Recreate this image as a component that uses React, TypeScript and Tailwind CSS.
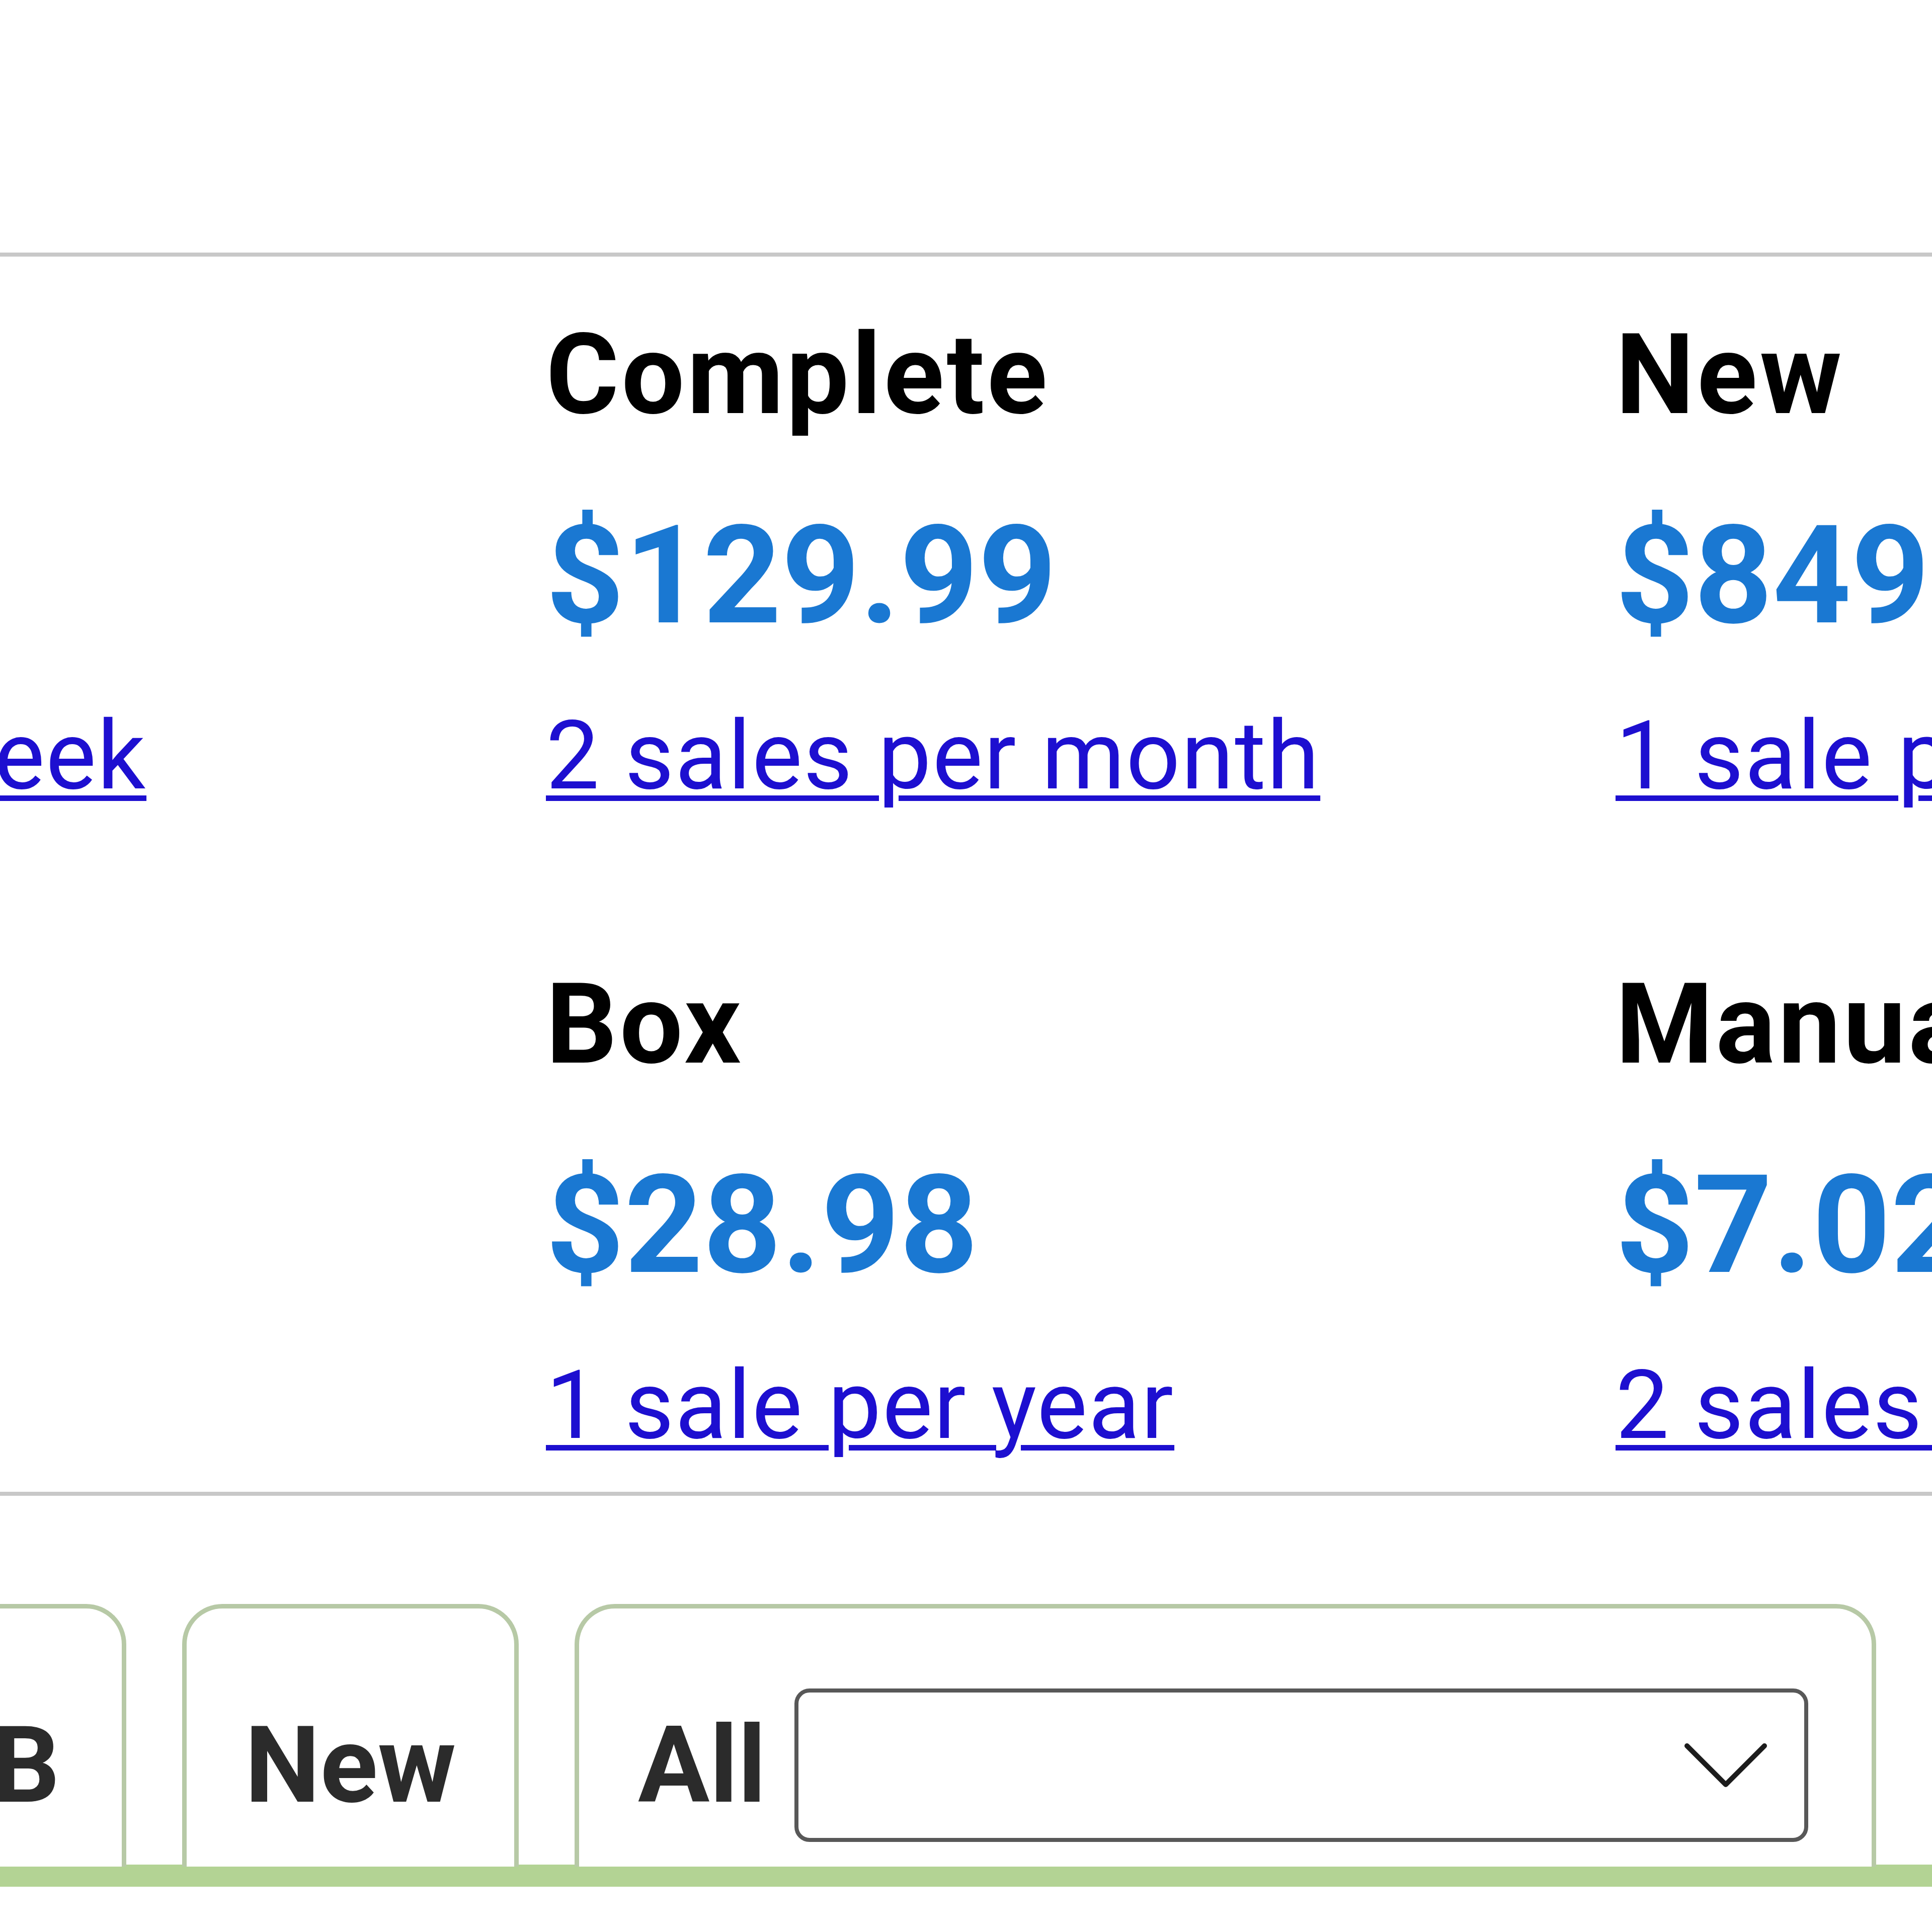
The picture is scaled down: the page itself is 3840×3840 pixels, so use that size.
import React from 'react'

interface PriceItem {
  title: string
  price: string
  sales: string
}

const rows: PriceItem[][] = [
  [
    { title: 'Loose', price: '$59.99', sales: '1 sale per week' },
    { title: 'Complete', price: '$129.99', sales: '2 sales per month' },
    { title: 'New', price: '$849.99', sales: '1 sale per year' }
  ],
  [
    { title: 'Graded', price: '$155.00', sales: 'No sales' },
    { title: 'Box', price: '$28.98', sales: '1 sale per year' },
    { title: 'Manual', price: '$7.02', sales: '2 sales per month' }
  ]
]

const PriceCell: React.FC<{ item: PriceItem }> = ({ item }) => (
  <div className="flex flex-col items-start whitespace-nowrap">
    <h3 className="text-[222px] font-bold leading-[264px] tracking-[5px] text-black">
      {item.title}
    </h3>
    <p className="mt-[104px] text-[272px] font-bold leading-[326px] text-[#1a78d2]">
      {item.price}
    </p>
    <a
      href="#"
      className="mt-[82px] text-[189px] leading-[227px] tracking-[2px] text-[#1d0fd0] underline decoration-[11px] underline-offset-[14px]"
    >
      {item.sales}
    </a>
  </div>
)

const Tab: React.FC<{ className?: string; children: React.ReactNode }> = ({
  className = '',
  children
}) => (
  <div
    className={`flex h-[522px] shrink-0 items-center rounded-t-[80px] border-[9px] border-b-0 border-[#b7c9a6] bg-white pt-[110px] ${className}`}
  >
    {children}
  </div>
)

export default function App() {
  return (
    <div className="h-[3840px] w-[3840px] overflow-hidden bg-white font-[Roboto,sans-serif]">
      <div className="h-[502px]" />

      <section className="border-y-[8px] border-[#c8c8c8]">
        <div className="ml-[-1041px] grid grid-cols-[repeat(3,2126px)] gap-y-[288px] pb-[58px] pt-[103px]">
          {rows.flat().map(item => (
            <PriceCell key={item.title} item={item} />
          ))}
        </div>
      </section>

      <div className="ml-[-349px] mt-[215px] flex items-end gap-[111px]">
        <Tab className="w-[600px] justify-center">
          <span className="text-[212px] font-bold leading-none text-[#2b2b2b]">CIB</span>
        </Tab>
        <Tab className="w-[669px] justify-center">
          <span className="text-[212px] font-bold leading-none text-[#2b2b2b]">New</span>
        </Tab>
        <Tab className="w-[2587px] pl-[117px]">
          <span className="text-[212px] font-bold leading-none text-[#2b2b2b]">All</span>
          <div className="ml-[56px] flex h-[305px] w-[2015px] items-center justify-end rounded-[30px] border-[8px] border-[#585858] bg-white pr-[74px]">
            <svg width="164" height="88" viewBox="0 0 164 88" fill="none">
              <polyline
                points="5,5 82,82 159,5"
                stroke="#1c1c1c"
                strokeWidth="10"
                strokeLinecap="round"
                strokeLinejoin="round"
              />
            </svg>
          </div>
        </Tab>
      </div>
      <div className="mt-[-4px] h-[44px] w-full bg-[#b3d394]" />
    </div>
  )
}
